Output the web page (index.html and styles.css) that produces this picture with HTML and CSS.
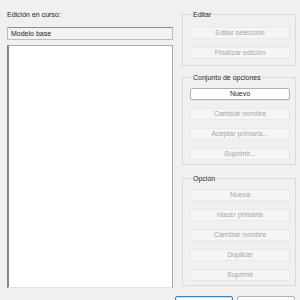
FILE: index.html
```html
<!DOCTYPE html>
<html lang="es">
<head>
    <meta charset="UTF-8">
    <meta name="viewport" content="width=device-width, initial-scale=1.0">
    <title>Modelos de diseño</title>
    <link rel="stylesheet" href="styles.css">
</head>
<body>
    <div class="dialog">
        <div class="main-row">
            <div class="left-col">
                <div class="field-label">Edición en curso:</div>
                <div class="text-box">Modelo base</div>
                <div class="list-box"></div>
            </div>

            <div class="right-col">
                <fieldset class="group group-first">
                    <legend>Editar</legend>
                    <button class="btn" disabled>Editar selección</button>
                    <button class="btn" disabled>Finalizar edición</button>
                </fieldset>

                <fieldset class="group">
                    <legend>Conjunto de opciones</legend>
                    <button class="btn">Nuevo</button>
                    <button class="btn" disabled>Cambiar nombre</button>
                    <button class="btn" disabled>Aceptar primaria...</button>
                    <button class="btn" disabled>Suprimir...</button>
                </fieldset>

                <fieldset class="group group-last">
                    <legend>Opción</legend>
                    <button class="btn" disabled>Nueva</button>
                    <button class="btn" disabled>Hacer primaria</button>
                    <button class="btn" disabled>Cambiar nombre</button>
                    <button class="btn" disabled>Duplicar</button>
                    <button class="btn" disabled>Suprimir</button>
                </fieldset>
            </div>
        </div>

        <!-- dialog buttons sit below the visible area, only their tops show -->
        <div class="footer">
            <button class="btn btn-footer btn-default"></button>
            <button class="btn btn-footer"></button>
        </div>
    </div>
</body>
</html>
```

FILE: styles.css
```css
* {
    box-sizing: border-box;
}
body {
    margin: 0;
    background: #f0f0f0;
    font-family: "Liberation Sans", Arial, sans-serif;
    font-size: 7px;
    color: #1e1e1e;
    overflow: hidden;
}
.dialog {
    width: 300px;
    height: 300px;
    padding-top: 10px;
}
.main-row {
    display: flex;
    gap: 9px;
    padding-left: 7px;
}
.left-col {
    width: 166px;
    display: flex;
    flex-direction: column;
}
.field-label {
    line-height: 9px;
    height: 9px;
}
.text-box {
    margin-top: 8px;
    height: 13px;
    line-height: 11px;
    padding-left: 3px;
    background: #f2f2f2;
    border: 1px solid #bcbcbc;
    border-top-color: #8f8f8f;
}
.list-box {
    margin-top: 5px;
    height: 243px;
    background: #fff;
    border: 1px solid #a9a9a9;
    border-left: 2px solid #858585;
    border-bottom-color: #e2e2e2;
}
.right-col {
    width: 114px;
    margin-top: -1px;
}
.group {
    margin: 0 0 8px;
    padding: 5px 5px 4px 7px;
    border: 1px solid #dadada;
    display: flex;
    flex-direction: column;
    gap: 8px;
}
.group legend {
    padding: 0 1px;
    margin-left: 2px;
    line-height: 11px;
}
.group-first {
    padding-top: 7px;
    padding-bottom: 6px;
    margin-bottom: 6px;
}
.group-last {
    margin-bottom: 0;
}
.btn {
    height: 12px;
    width: 100px;
    padding: 0;
    font-family: inherit;
    font-size: 7px;
    line-height: 10px;
    color: #1e1e1e;
    background: #fdfdfd;
    border: 1px solid #b1b1b1;
    border-radius: 2px;
    box-shadow: 0 1px 0 #e4e4e4;
}
.btn:disabled {
    color: #a6a6a6;
    background: #f5f5f5;
    border-color: #e9e9e9;
    box-shadow: none;
}
.footer {
    display: flex;
    justify-content: flex-end;
    gap: 4px;
    padding-right: 5px;
    margin-top: 8px;
}
.btn-footer {
    width: 58px;
    height: 14px;
}
.btn-default {
    border-color: #3b80c0;
    box-shadow: inset 0 0 0 1px #cfe3f5;
}
```
